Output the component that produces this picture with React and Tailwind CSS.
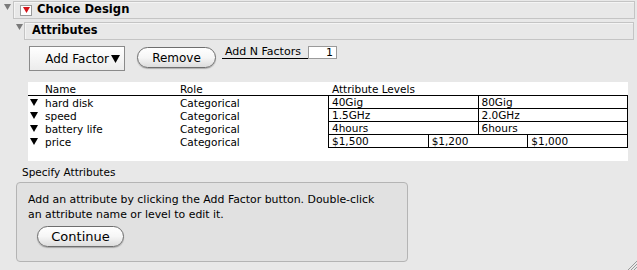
import React from 'react';

const attributes = [
  { name: 'hard disk', levels: ['40Gig', '80Gig'] },
  { name: 'speed', levels: ['1.5GHz', '2.0GHz'] },
  { name: 'battery life', levels: ['4hours', '6hours'] },
  { name: 'price', levels: ['$1,500', '$1,200', '$1,000'] },
];

function DownTri({ className = '', color = '#000', w = 7, h = 6 }) {
  return (
    <svg width={w} height={h} viewBox={`0 0 ${w} ${h}`} className={className}>
      <polygon points={`0,0 ${w},0 ${w / 2},${h}`} fill={color} />
    </svg>
  );
}

function PillButton({ children, className = '' }) {
  return (
    <div
      className={`flex items-center justify-center rounded-full border border-[#6e6e6e] bg-gradient-to-b from-white via-[#f6f6f6] to-[#dcdcdc] shadow-[0_1px_1px_rgba(0,0,0,0.25)] text-[12px] text-black ${className}`}
    >
      {children}
    </div>
  );
}

export default function App() {
  return (
    <div className="relative w-[637px] h-[270px] overflow-hidden bg-[#e8e8e8] font-['DejaVu_Sans',sans-serif] text-black">
      {/* Choice Design outline header */}
      <div className="flex items-start pt-[1px]">
        <DownTri className="ml-[4px] mt-[3px]" color="#7a7a7a" />
        <div className="ml-[2px] flex h-[18px] w-[622px] items-center border border-[#c4c4c4] shadow-[inset_1px_1px_0_#f4f4f4]">
          <div className="ml-[6px] flex h-[11px] w-[12px] items-center justify-center border border-[#9a9a9a] bg-white">
            <DownTri color="#d4141a" />
          </div>
          <span className="ml-[5px] text-[11.6px] font-bold leading-none">Choice Design</span>
        </div>
      </div>

      {/* Attributes outline header */}
      <div className="mt-[3px] flex items-start">
        <DownTri className="ml-[16px] mt-[2px]" color="#7a7a7a" />
        <div className="ml-[1px] flex h-[18px] w-[610px] items-center border border-[#c4c4c4] shadow-[inset_1px_1px_0_#f4f4f4]">
          <span className="ml-[7px] text-[11.4px] font-bold leading-none">Attributes</span>
        </div>
      </div>

      {/* Controls */}
      <div className="mt-[6px] flex items-start">
        <div className="ml-[29px] flex h-[25px] w-[96px] items-center justify-end gap-[2px] border border-[#8a8a8a] bg-gradient-to-b from-white to-[#ececec] pr-[4px] text-[12px]">
          <span>Add Factor</span>
          <svg width="9" height="8" viewBox="0 0 9 8">
            <polygon points="0,0 9,0 4.5,8" fill="#000" />
          </svg>
        </div>
        <PillButton className="ml-[12px] mt-[1px] h-[21px] w-[79px]">Remove</PillButton>
        <div className="ml-[6px] mt-[-1px] flex items-end">
          <div className="w-[86px] border-b border-black pl-[3px] text-[11px] leading-[13px]">Add N Factors</div>
          <div className="h-[13px] w-[29px] border border-[#9a9a9a] bg-white pr-[3px] text-right text-[11px] leading-[11px]">1</div>
        </div>
      </div>

      {/* Attribute table */}
      <div className="ml-[28px] mt-[11px] h-[79px] w-[600px] overflow-hidden bg-white text-[10.5px] leading-[12px]">
        <div className="flex h-[14px] items-center border-b border-black">
          <span className="ml-[17px] w-[135px]">Name</span>
          <span className="w-[148px]">Role</span>
          <span className="ml-[4px]">Attribute Levels</span>
        </div>
        {attributes.map((a) => (
          <div key={a.name} className="flex h-[13px] items-center">
            <div className="flex w-[17px] pl-[2px]">
              <DownTri w={8} h={7} />
            </div>
            <span className="w-[135px]">{a.name}</span>
            <span className="w-[148px]">Categorical</span>
            <div className="flex h-[13px] w-[300px] border-b border-l border-black">
              {a.levels.map((lv) => (
                <div key={lv} className="flex-1 border-r border-black pl-[3px]">{lv}</div>
              ))}
            </div>
          </div>
        ))}
      </div>

      {/* Specify Attributes */}
      <div className="ml-[22px] mt-[5px] text-[10.5px] leading-[13px]">Specify Attributes</div>
      <div className="ml-[16px] mt-[3px] h-[80px] w-[392px] rounded-[4px] border border-[#b4b4b4] bg-[#e1e1e1] pl-[11px] pt-[9px]">
        <p className="text-[10.9px] leading-[15px]">
          Add an attribute by clicking the Add Factor button. Double-click
          <br />
          an attribute name or level to edit it.
        </p>
        <PillButton className="ml-[9px] mt-[4px] h-[21px] w-[87px] text-[13px]">Continue</PillButton>
      </div>

      {/* Resize grip */}
      <svg className="absolute bottom-0 right-0" width="10" height="10" viewBox="0 0 10 10">
        <line x1="10" y1="1" x2="1" y2="10" stroke="#9a9a9a" strokeWidth="1" />
        <line x1="10" y1="4" x2="4" y2="10" stroke="#9a9a9a" strokeWidth="1" />
        <line x1="10" y1="7" x2="7" y2="10" stroke="#9a9a9a" strokeWidth="1" />
      </svg>
    </div>
  );
}
